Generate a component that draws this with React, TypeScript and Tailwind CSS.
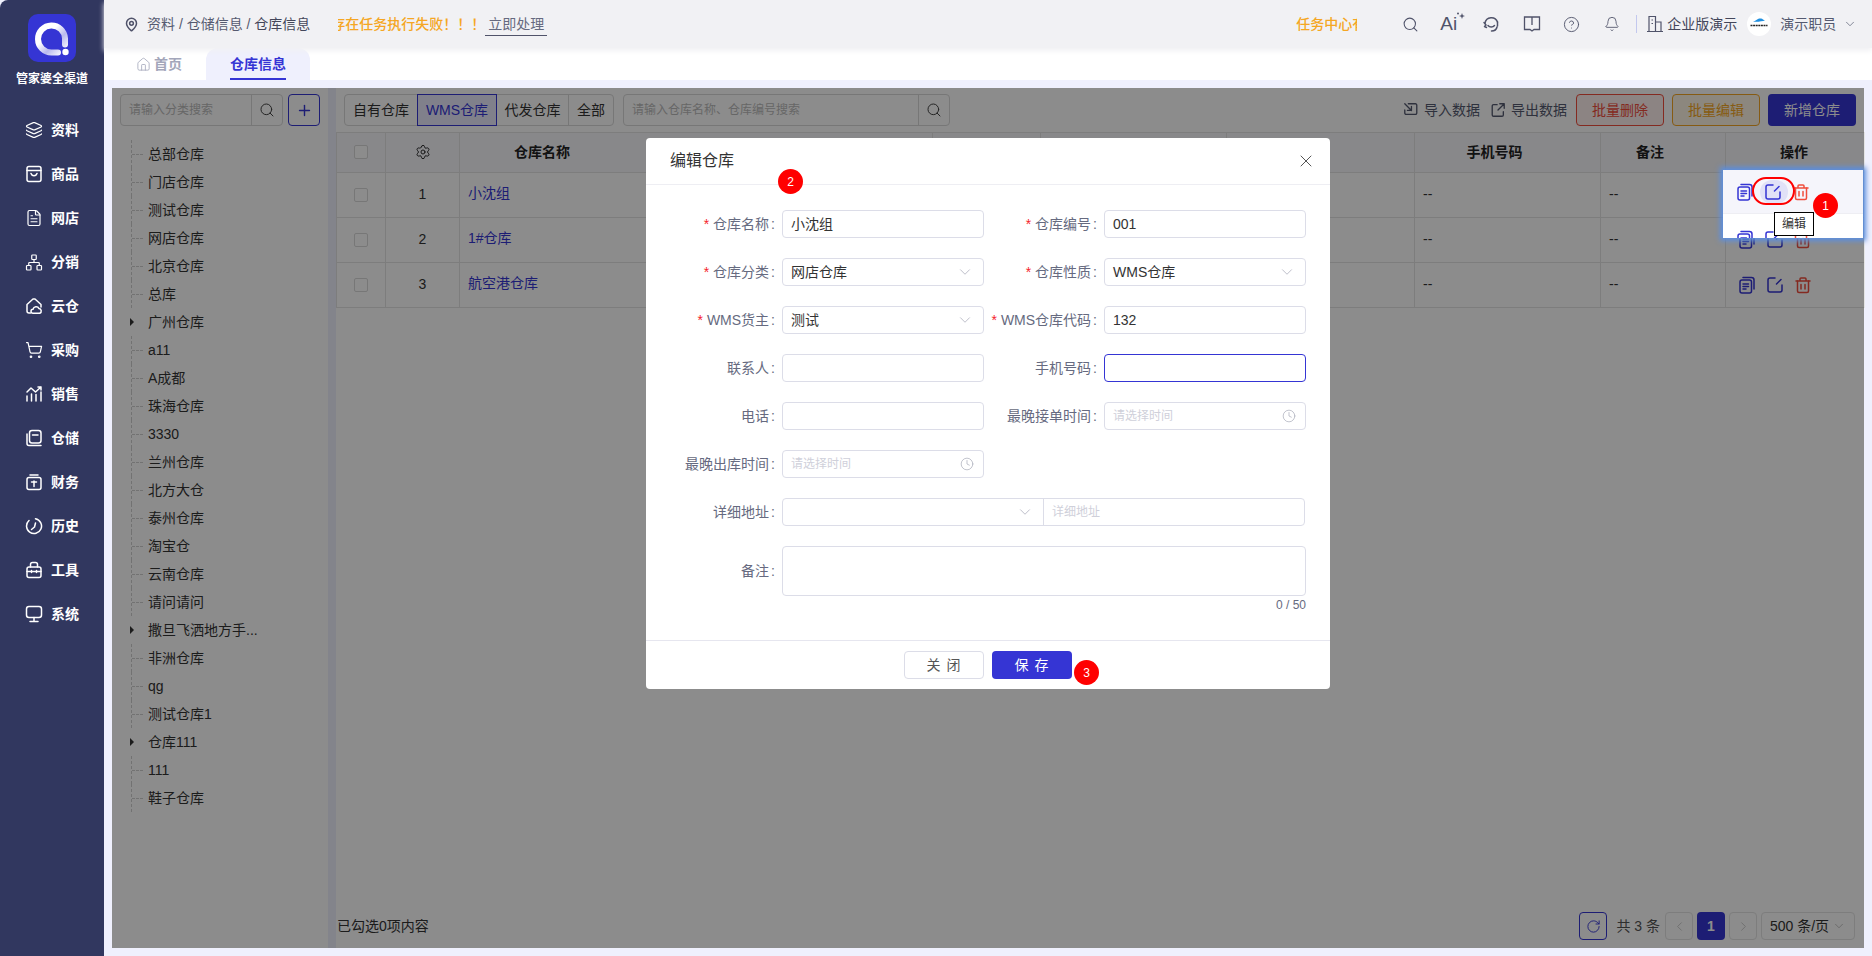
import { ReactNode } from "react";
import {
  Bell,
  ChevronDown,
  ChevronLeft,
  ChevronRight,
  CircleHelp,
  Clock,
  FileText,
  Home,
  Layers,
  MapPin,
  Network,
  Plus,
  RotateCw,
  Search,
  Settings,
  ShoppingCart,
  X,
} from "lucide-react";

const Glyph = ({ children, size = 18 }: { children: ReactNode; size?: number }) => (
  <svg
    width={size}
    height={size}
    viewBox="0 0 18 18"
    fill="none"
    stroke="currentColor"
    strokeWidth="1.5"
    strokeLinecap="round"
    strokeLinejoin="round"
    className="shrink-0"
  >
    {children}
  </svg>
);

const navItems: { label: string; icon: ReactNode }[] = [
  { label: "资料", icon: <Layers size={18} strokeWidth={1.6} /> },
  {
    label: "商品",
    icon: (
      <Glyph>
        <rect x="2" y="1.500" width="14" height="15" rx="2" />
        <path d="M2 5.500h14M6 8.500c1 3 5 3 6 0" />
      </Glyph>
    ),
  },
  { label: "网店", icon: <FileText size={18} strokeWidth={1.6} /> },
  { label: "分销", icon: <Network size={19} strokeWidth={1.6} /> },
  {
    label: "云仓",
    icon: (
      <Glyph>
        <path d="M5.500 16H4a2 2 0 0 1-2-2V7.500L8 2h2l6 5.500V10" />
        <path d="M8 16.200a2 2 0 0 1 0-4 3.200 3.200 0 0 1 6-.6 2.400 2.400 0 0 1 .8 4.600z" />
      </Glyph>
    ),
  },
  { label: "采购", icon: <ShoppingCart size={18} strokeWidth={1.6} /> },
  {
    label: "销售",
    icon: (
      <Glyph>
        <path d="M2 16v-5M6.500 16V9M11 16V9.500M16 16V7" />
        <path d="M2 7l4-4 4.500 4L16 2M13 2h3v3" />
      </Glyph>
    ),
  },
  {
    label: "仓储",
    icon: (
      <Glyph>
        <path d="M2 5v9.500A2 2 0 0 0 4 16.500h12" />
        <rect x="4.500" y="1.500" width="11.500" height="12.500" rx="2.500" />
        <path d="M7.500 6h5.500" />
      </Glyph>
    ),
  },
  {
    label: "财务",
    icon: (
      <Glyph>
        <path d="M5 2h8" />
        <rect x="2" y="4.500" width="14" height="12" rx="2" />
        <path d="M9 8v5.500M6.500 9h5" />
      </Glyph>
    ),
  },
  {
    label: "历史",
    icon: (
      <Glyph>
        <path d="M10.500 1.700A7.500 7.500 0 1 1 4 3.500" />
        <path d="M10.500 6 9.500 10 6.500 12.500" />
      </Glyph>
    ),
  },
  {
    label: "工具",
    icon: (
      <Glyph>
        <rect x="2" y="6" width="14" height="10.500" rx="2" />
        <path d="M5.500 6V3.500a2 2 0 0 1 2-2h3a2 2 0 0 1 2 2V6M2 10.500h14M6.500 9.500v2M11.500 9.500v2" />
      </Glyph>
    ),
  },
  {
    label: "系统",
    icon: (
      <Glyph>
        <rect x="1.500" y="1.500" width="15" height="11" rx="2.500" />
        <path d="M9 12.500v3.500M5 16.500h8" />
      </Glyph>
    ),
  },
];

const treeItems: { label: string; caret?: boolean }[] = [
  { label: "总部仓库" },
  { label: "门店仓库" },
  { label: "测试仓库" },
  { label: "网店仓库" },
  { label: "北京仓库" },
  { label: "总库" },
  { label: "广州仓库", caret: true },
  { label: "a11" },
  { label: "A成都" },
  { label: "珠海仓库" },
  { label: "3330" },
  { label: "兰州仓库" },
  { label: "北方大仓" },
  { label: "泰州仓库" },
  { label: "淘宝仓" },
  { label: "云南仓库" },
  { label: "请问请问" },
  { label: "撒旦飞洒地方手...", caret: true },
  { label: "非洲仓库" },
  { label: "qg" },
  { label: "测试仓库1" },
  { label: "仓库111", caret: true },
  { label: "111" },
  { label: "鞋子仓库" },
];

const rows = [
  { no: 1, name: "小沈组" },
  { no: 2, name: "1#仓库" },
  { no: 3, name: "航空港仓库" },
];

const Logo = () => (
  <svg width="48" height="48" viewBox="0 0 48 48" className="shrink-0">
    <defs>
      <linearGradient id="ring" x1="0" y1="0" x2="1" y2="1">
        <stop offset="0.35" stopColor="#ffffff" />
        <stop offset="0.65" stopColor="#b9b9ee" />
        <stop offset="1" stopColor="#ffffff" />
      </linearGradient>
    </defs>
    <rect width="48" height="48" rx="10" fill="#3535d4" />
    <path
      d="M37 30.500V24.500a13.500 13.500 0 1 0-13.500 14H30"
      fill="none"
      stroke="url(#ring)"
      strokeWidth="6"
      strokeLinecap="round"
    />
    <circle cx="37.500" cy="38" r="3.200" fill="#fff" />
  </svg>
);

const Avatar = () => (
  <svg width="24" height="24" viewBox="0 0 24 24" className="shrink-0">
    <circle cx="12" cy="12" r="12" fill="#fff" />
    <path d="M6 9.500c3-.3 4-3.500 8-3 1.500.2 2.500 1.500 4 2-3 .8-8 1.800-12 1z" fill="#1f8fe0" />
    <path d="M3.500 13.500h17" stroke="#222" strokeWidth="1.400" strokeDasharray="2 .6" />
  </svg>
);

const ImportIcon = () => (
  <Glyph size={16}>
    <path d="M6 2h8a1.500 1.500 0 0 1 1.500 1.500v9A1.500 1.500 0 0 1 14 14H3.500A1.500 1.500 0 0 1 2 12.500V9" />
    <path d="M2 2l7.500 7.500M9.500 5v4.500H5" />
  </Glyph>
);

const ExportIcon = () => (
  <Glyph size={16}>
    <path d="M8 3H4a1.500 1.500 0 0 0-1.500 1.500v10A1.500 1.500 0 0 0 4 16h9.500a1.500 1.500 0 0 0 1.500-1.500V11" />
    <path d="M9 9l6.500-6.500M11 2h5v5" />
  </Glyph>
);

const HeadsetIcon = () => (
  <Glyph>
    <path d="M3 8a6.500 6.500 0 0 1 12.500-1" />
    <path d="M15.500 7v4" />
    <path d="M2 7.500l2 2.500-1.500 1.500 2 1" />
    <path d="M6 10.500c1.500 2 5 2 6.500 0" />
    <path d="M15 12c-.5 2.500-3 4-5.500 4" />
  </Glyph>
);

const AiIcon = () => (
  <span className="relative block h-5 w-[24px] text-[19px] leading-5 text-[#50536a]">
    Ai
    <svg width="10" height="10" viewBox="0 0 10 10" className="absolute -right-[2px] -top-[2px]" fill="currentColor">
      <path d="M6 1l.8 2.200L9 4l-2.200.8L6 7l-.8-2.200L3 4l2.200-.8z" />
      <circle cx="2" cy="1.500" r="1" />
    </svg>
  </span>
);

const ActionIcons = () => (
  <div className="flex items-center gap-[10px]">
    <span className="text-[#3535d4]">
      <Glyph>
        <rect x="2" y="4" width="11.500" height="13" rx="2" />
        <path d="M5 1.500h8.500A2.500 2.500 0 0 1 16 4v9M5 8h5.500M5 10.500h5.500M5 13h3" />
      </Glyph>
    </span>
    <span className="text-[#3535d4]">
      <Glyph>
        <path d="M9 2H4a2 2 0 0 0-2 2v10a2 2 0 0 0 2 2h10a2 2 0 0 0 2-2V9" />
        <path d="M15 3.500 10.500 8" />
      </Glyph>
    </span>
    <span className="text-[#f04d3c]">
      <Glyph>
        <path d="M2 5h14M6 5V3a1 1 0 0 1 1-1h4a1 1 0 0 1 1 1v2" />
        <path d="M3.500 5v10a1.500 1.500 0 0 0 1.500 1.500h8a1.500 1.500 0 0 0 1.500-1.500V5M7 8.500v4.500M11 8.500v4.500" />
      </Glyph>
    </span>
  </div>
);

const Badge = ({ n, className }: { n: number; className: string }) => (
  <div
    className={`absolute flex h-[25px] w-[25px] items-center justify-center rounded-full bg-[#ff0000] text-[12px] text-white ${className}`}
  >
    {n}
  </div>
);

const Label = ({ text, required, width }: { text: string; required?: boolean; width: string }) => (
  <label className={`flex shrink-0 items-center justify-end pr-[7px] text-[14px] whitespace-nowrap text-[#666a80] ${width}`}>
    {required && <span className="mr-[4px] text-[#f5222d]">*</span>}
    {text}
    <span className="ml-[2px]">:</span>
  </label>
);

const Control = ({
  value,
  placeholder,
  trailing,
  focused,
}: {
  value?: string;
  placeholder?: string;
  trailing?: ReactNode;
  focused?: boolean;
}) => (
  <div
    className={`flex h-[28px] flex-1 items-center justify-between rounded-[4px] border bg-white pl-2 pr-[9px] text-[14px] text-[#333] ${
      focused ? "border-[#3535d4]" : "border-[#dcdde8]"
    }`}
  >
    {value ? <span>{value}</span> : <span className="text-[12px] text-[#cfd0da]">{placeholder}</span>}
    {trailing}
  </div>
);

const caret = <ChevronDown size={18} strokeWidth={1} className="text-[#a8aab8]" />;
const clock = <Clock size={14} strokeWidth={1.2} className="text-[#a8aab8]" />;

const FormRow = ({ children }: { children: ReactNode }) => <div className="flex h-[28px]">{children}</div>;

const Half = ({ label, required, children, wide }: { label: string; required?: boolean; children: ReactNode; wide?: boolean }) => (
  <div className={`flex ${wide ? "w-[322px]" : "w-[338px]"}`}>
    <Label text={label} required={required} width={wide ? "w-[120px]" : "w-[136px]"} />
    {children}
  </div>
);

const Modal = () => (
  <div className="flex h-[551px] w-[684px] flex-col rounded-[4px] bg-white">
    <div className="flex h-[47px] shrink-0 items-center justify-between border-b border-[#eeeef3] pl-6 pr-[14px]">
      <span className="text-[16px] text-[#333]">编辑仓库</span>
      <X size={20} strokeWidth={1.2} className="text-[#555]" />
    </div>
    <div className="flex flex-1 flex-col gap-[20px] pt-[25px] pr-6">
      <FormRow>
        <Half label="仓库名称" required>
          <Control value="小沈组" />
        </Half>
        <Half label="仓库编号" required wide>
          <Control value="001" />
        </Half>
      </FormRow>
      <FormRow>
        <Half label="仓库分类" required>
          <Control value="网店仓库" trailing={caret} />
        </Half>
        <Half label="仓库性质" required wide>
          <Control value="WMS仓库" trailing={caret} />
        </Half>
      </FormRow>
      <FormRow>
        <Half label="WMS货主" required>
          <Control value="测试" trailing={caret} />
        </Half>
        <Half label="WMS仓库代码" required wide>
          <Control value="132" />
        </Half>
      </FormRow>
      <FormRow>
        <Half label="联系人">
          <Control />
        </Half>
        <Half label="手机号码" wide>
          <Control focused />
        </Half>
      </FormRow>
      <FormRow>
        <Half label="电话">
          <Control />
        </Half>
        <Half label="最晚接单时间" wide>
          <Control placeholder="请选择时间" trailing={clock} />
        </Half>
      </FormRow>
      <FormRow>
        <Half label="最晚出库时间">
          <Control placeholder="请选择时间" trailing={clock} />
        </Half>
      </FormRow>
      <FormRow>
        <Label text="详细地址" width="w-[136px]" />
        <div className="mr-px flex h-[28px] flex-1 rounded-[4px] border border-[#dcdde8] text-[12px] text-[#cfd0da]">
          <div className="flex w-[261px] items-center justify-end border-r border-[#dcdde8] pr-[9px]">{caret}</div>
          <div className="flex flex-1 items-center pl-2">详细地址</div>
        </div>
      </FormRow>
      <div className="flex h-[50px]">
        <Label text="备注" width="w-[136px]" />
        <div className="flex-1 rounded-[4px] border border-[#dcdde8]" />
      </div>
    </div>
    <div className="-mt-[8px] mb-[27px] pr-6 text-right text-[12px] leading-[16px] text-[#666a80]">0 / 50</div>
    <div className="flex h-[49px] shrink-0 justify-center gap-2 border-t border-[#e6e6ef] pt-[10px]">
      <button className="h-[28px] w-[80px] rounded-[4px] border border-[#dcdde8] bg-white text-[14px] tracking-[1px] text-[#555]">关 闭</button>
      <button className="h-[28px] w-[80px] rounded-[4px] bg-[#3535d4] text-[14px] tracking-[1px] text-white">保 存</button>
    </div>
  </div>
);

const TreeRow = ({ label, caret: hasCaret }: { label: string; caret?: boolean }) => (
  <div className="ml-[11px] flex h-7 items-center">
    {hasCaret ? (
      <span className="-ml-[1px] mr-[13px] h-0 w-0 border-y-[4px] border-l-[4px] border-y-transparent border-l-[#333]" />
    ) : (
      <>
        <span className="h-full border-l border-dashed border-[#d0d0d0]" />
        <span className="mr-[5px] w-[11px] border-t border-dashed border-[#d0d0d0]" />
      </>
    )}
    <span className={`text-[14px] text-[#333] ${hasCaret ? "ml-[1px]" : ""}`}>{label}</span>
  </div>
);

const Th = ({ children }: { children?: ReactNode }) => (
  <th className="border border-[#e4e4e4] bg-[#f7f7fc] pb-[1px] text-center text-[14px] font-bold text-[#222]">{children}</th>
);

const Td = ({ children, className = "" }: { children?: ReactNode; className?: string }) => (
  <td className={`border border-[#e4e4e4] text-[14px] text-[#333] ${className}`}>{children}</td>
);

const CheckBox = () => <span className="mx-auto block h-[14px] w-[14px] rounded-[2px] border border-[#d9d9d9] bg-white" />;

const pageBtn = "flex h-[28px] w-[28px] items-center justify-center rounded-[4px] border border-[#e3e3e3] text-[#bbb]";

export default function App() {
  return (
    <div className="flex h-screen w-full overflow-hidden bg-[#eff0fd] text-[#333] [font-family:'Liberation_Sans','Noto_Sans_CJK_SC',sans-serif]">
      <aside className="flex w-[104px] shrink-0 flex-col items-center rounded-tl-lg bg-[#31375f] pt-[14px] text-white">
        <Logo />
        <div className="mt-[9px] text-[12px] font-bold leading-4 whitespace-nowrap">管家婆全渠道</div>
        <nav className="mt-[21px] flex w-full flex-col">
          {navItems.map((item) => (
            <div key={item.label} className="flex h-[44px] items-center gap-2 pl-[25px] text-[14px] font-bold">
              <span className="flex w-[18px] justify-center">{item.icon}</span>
              {item.label}
            </div>
          ))}
        </nav>
      </aside>

      <main className="flex min-w-0 flex-1 flex-col">
        <header className="relative z-10 flex h-12 shrink-0 items-center bg-[#f1f1f4] text-[14px] text-[#555a70] shadow-[0_3px_5px_#f1f1f4]">
          <MapPin size={15} strokeWidth={2.4} className="ml-[20px] text-[#50536a]" />
          <span className="ml-[8px] whitespace-nowrap">
            资料 / 仓储信息 / <span className="text-[#44465a]">仓库信息</span>
          </span>
          <div className="ml-[28px] w-[142px] overflow-hidden whitespace-nowrap text-[14px] font-medium text-[#f5a623]">
            <span className="-ml-[7px] inline-block">存在任务执行失败！！！</span>
          </div>
          <span className="ml-[5px] mt-[2px] border-b border-[#50536a] px-[3px] text-[#666a80]">立即处理</span>
          <div className="ml-[749px] w-[61px] overflow-hidden whitespace-nowrap font-medium text-[#f5a623]">任务中心有</div>
          <Search size={17} strokeWidth={1.5} className="ml-[45px] text-[#50536a]" />
          <span className="ml-[21px]">
            <AiIcon />
          </span>
          <span className="ml-[18px] text-[#50536a]">
            <HeadsetIcon />
          </span>
          <svg width="18" height="18" viewBox="0 0 18 18" fill="none" stroke="currentColor" strokeWidth="1.3" className="ml-[23px] text-[#50536a]">
            <path d="M1.500 2h15v12.500H11L9 16l-2-1.500H1.500zM9 2v8" />
          </svg>
          <CircleHelp size={17} strokeWidth={1.3} className="ml-[22px] text-[#50536a]" />
          <Bell size={16} strokeWidth={1.3} className="ml-[24px] text-[#50536a]" />
          <span className="ml-[16px] h-[18px] border-l border-[#c3c8ee]" />
          <svg width="16" height="18" viewBox="0 0 16 18" fill="none" stroke="currentColor" strokeWidth="1.2" className="ml-[10px] text-[#50536a]">
            <path d="M2 16.500V1.500h6.500v15M8.500 7H14v9.500M0 16.500h16M4.500 5h1.500M4.500 8.500h1.500" />
          </svg>
          <span className="ml-[4px] whitespace-nowrap text-[#44465a]">企业版演示</span>
          <span className="ml-[10px]">
            <Avatar />
          </span>
          <span className="ml-[9px] whitespace-nowrap">演示职员</span>
          <ChevronDown size={14} strokeWidth={1.2} className="ml-[7px]" />
        </header>

        <div className="flex h-8 shrink-0 items-end bg-white text-[14px] font-bold">
          <div className="ml-[32px] flex h-8 w-[70px] items-center gap-[3px] text-[#a3a6ba]">
            <Home size={15} strokeWidth={1.3} />
            首页
          </div>
          <div className="relative flex h-8 w-[104px] items-center justify-center rounded-t-xl bg-[#eff0fd] text-[#3535d4]">
            仓库信息
            <span className="absolute bottom-0 left-6 h-[2px] w-[56px] bg-[#3535d4]" />
          </div>
        </div>

        <div className="relative mx-2 my-2 flex min-h-0 flex-1 gap-2">
          <section className="flex w-[216px] shrink-0 flex-col bg-white px-2 pt-[6px]">
            <div className="flex h-8 shrink-0 gap-[5px]">
              <div className="flex flex-1 rounded-[4px] border border-[#d9d9d9]">
                <div className="flex flex-1 items-center pl-[8px] text-[12px] text-[#bbb]">请输入分类搜索</div>
                <div className="flex w-[31px] items-center justify-center border-l border-[#d9d9d9]">
                  <Search size={16} strokeWidth={1.5} className="text-[#444]" />
                </div>
              </div>
              <div className="flex w-8 items-center justify-center rounded-[4px] border border-[#3535d4] text-[#3535d4]">
                <Plus size={17} strokeWidth={2} />
              </div>
            </div>
            <div className="mt-[14px]">
              {treeItems.map((t) => (
                <TreeRow key={t.label} label={t.label} caret={t.caret} />
              ))}
            </div>
          </section>

          <section className="flex min-w-0 flex-1 flex-col bg-white">
            <div className="mt-[6px] flex h-8 shrink-0 items-center px-2 text-[14px]">
              <div className="flex h-8 rounded-[4px] border border-[#d9d9d9]">
                <span className="flex w-[72px] items-center justify-center">自有仓库</span>
                <span className="-my-px flex w-[80px] items-center justify-center border border-[#3535d4] bg-[#e9e9fd] text-[#3535d4]">WMS仓库</span>
                <span className="flex w-[72px] items-center justify-center border-r border-[#d9d9d9]">代发仓库</span>
                <span className="flex w-[44px] items-center justify-center">全部</span>
              </div>
              <div className="ml-[9px] flex h-8 w-[327px] rounded-[4px] border border-[#d9d9d9]">
                <div className="flex flex-1 items-center pl-[8px] text-[12px] text-[#bbb]">请输入仓库名称、仓库编号搜索</div>
                <div className="flex w-[31px] items-center justify-center border-l border-[#d9d9d9]">
                  <Search size={16} strokeWidth={1.5} className="text-[#444]" />
                </div>
              </div>
              <div className="ml-auto flex items-center gap-[5px] text-[#555a70]">
                <ImportIcon />
                <span>导入数据</span>
                <span className="ml-[5px]">
                  <ExportIcon />
                </span>
                <span>导出数据</span>
              </div>
              <button className="ml-[9px] h-8 w-[88px] rounded-[4px] border border-[#f04d3c] bg-[#fff0ee] text-[#f04d3c]">批量删除</button>
              <button className="ml-2 h-8 w-[88px] rounded-[4px] border border-[#f5a623] bg-[#fff6e6] text-[#f5a623]">批量编辑</button>
              <button className="ml-2 h-8 w-[88px] rounded-[4px] bg-[#3535d4] text-white">新增仓库</button>
            </div>

            <table className="mt-[6px] w-[1528px] table-fixed border-collapse">
              <colgroup>
                <col className="w-[49px]" />
                <col className="w-[74px]" />
                <col className="w-[473px]" />
                <col className="w-[108px]" />
                <col className="w-[186px]" />
                <col className="w-[188px]" />
                <col className="w-[186px]" />
                <col className="w-[125px]" />
                <col className="w-[139px]" />
              </colgroup>
              <thead>
                <tr className="h-[40px]">
                  <Th>
                    <CheckBox />
                  </Th>
                  <Th>
                    <Settings size={16} strokeWidth={1.4} className="mx-auto" />
                  </Th>
                  <Th>
                    <span className="mr-[308px]">仓库名称</span>
                  </Th>
                  <Th />
                  <Th />
                  <Th />
                  <Th>
                    <span className="mr-[26px]">手机号码</span>
                  </Th>
                  <Th>
                    <span className="mr-[26px]">备注</span>
                  </Th>
                  <Th>
                    <span className="mr-[2px]">操作</span>
                  </Th>
                </tr>
              </thead>
              <tbody>
                {rows.map((r) => (
                  <tr key={r.no} className="h-[45px]">
                    <Td>
                      <CheckBox />
                    </Td>
                    <Td className="pb-[2px] text-center">{r.no}</Td>
                    <Td className="pb-[4px] pl-2 text-[#3535d4]">{r.name}</Td>
                    <Td />
                    <Td />
                    <Td />
                    <Td className="pb-[2px] pl-2">--</Td>
                    <Td className="pb-[2px] pl-2">--</Td>
                    <Td className="pl-[12px]">
                      <ActionIcons />
                    </Td>
                  </tr>
                ))}
              </tbody>
            </table>

            <div className="mt-auto mb-2 flex h-[28px] shrink-0 items-center pl-px pr-[9px] text-[14px]">
              <span>已勾选0项内容</span>
              <div className="ml-auto flex items-center gap-1">
                <span className="flex h-[28px] w-[28px] items-center justify-center rounded-[4px] border border-[#3535d4] text-[#3535d4]">
                  <RotateCw size={15} strokeWidth={1.5} />
                </span>
                <span className="ml-[5px] mr-px whitespace-nowrap text-[#555]">共 3 条</span>
                <span className={pageBtn}>
                  <ChevronLeft size={15} strokeWidth={1.2} />
                </span>
                <span className="flex h-[28px] w-[28px] items-center justify-center rounded-[4px] bg-[#3535d4] font-bold text-white">1</span>
                <span className={pageBtn}>
                  <ChevronRight size={15} strokeWidth={1.2} />
                </span>
                <span className="flex h-[28px] w-[94px] items-center justify-center gap-[3px] rounded-[4px] border border-[#e3e3e3]">
                  500 条/页
                  <ChevronDown size={14} strokeWidth={1} className="text-[#999]" />
                </span>
              </div>
            </div>
          </section>

          <div className="absolute inset-0 flex justify-center bg-black/45 pt-[50px]">
            <Modal />
          </div>

          <Badge n={2} className="left-[666px] top-[81px]" />
          <Badge n={3} className="left-[962px] top-[572px]" />

          <div className="absolute left-[1611px] top-[82px] h-[68px] w-[140px] shadow-[0_0_5px_3px_#5b8fe0]">
            <div className="h-[68px] overflow-hidden bg-white">
              <div className="flex h-[44px] items-center border-b border-[#eeeef3] bg-[#f5f5fb] pl-[13px]">
                <ActionIcons />
              </div>
              <div className="flex h-[44px] items-center pt-[6px] pl-[13px]">
                <ActionIcons />
              </div>
            </div>
          </div>
          <div className="absolute left-[1648px] top-[92px] h-[24px] w-[28px] rounded-full bg-[#3535d4]/10" />
          <div className="absolute left-[1640px] top-[89px] h-[28px] w-[43px] rounded-full border-2 border-[#ff0000]" />
          <div className="absolute left-[1662px] top-[124px] flex h-[24px] w-[40px] items-center justify-center border border-black bg-white text-[12px] text-[#333]">
            编辑
          </div>
          <Badge n={1} className="left-[1701px] top-[105px]" />
        </div>
      </main>
    </div>
  );
}
